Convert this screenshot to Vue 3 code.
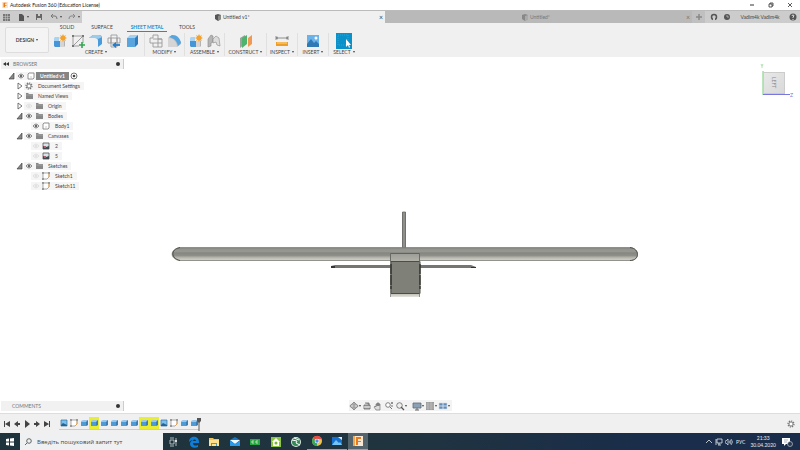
<script setup>
const ribbonTabs = ['SOLID', 'SURFACE', 'SHEET METAL', 'TOOLS']

const groups = [
  { name: 'CREATE', icons: ['component', 'sketch', 'flange', 'bend', 'extrude'], cls: 'g-create' },
  { name: 'MODIFY', icons: ['unfold', 'fillet'], cls: 'g-pair' },
  { name: 'ASSEMBLE', icons: ['component', 'joint'], cls: 'g-pair' },
  { name: 'CONSTRUCT', icons: ['plane'], cls: 'g-construct' },
  { name: 'INSPECT', icons: ['measure'], cls: 'g-single' },
  { name: 'INSERT', icons: ['picture'], cls: 'g-single' },
  { name: 'SELECT', icons: ['select'], cls: 'g-single' },
]

const tree = [
  { label: 'Untitled v1', level: 0, slots: ['open', 'eye', 'doc'], root: true },
  { label: 'Document Settings', level: 1, slots: ['closed', 'gear'] },
  { label: 'Named Views', level: 1, slots: ['closed', 'folder'] },
  { label: 'Origin', level: 1, slots: ['closed', 'eye-off', 'folder'] },
  { label: 'Bodies', level: 1, slots: ['open', 'eye', 'folder'] },
  { label: 'Body1', level: 2, slots: ['eye', 'doc'] },
  { label: 'Canvases', level: 1, slots: ['open', 'eye', 'folder'] },
  { label: '2', level: 2, slots: ['eye-off', 'canvas'] },
  { label: '5', level: 2, slots: ['eye-off', 'canvas'] },
  { label: 'Sketches', level: 1, slots: ['open', 'eye', 'folder'] },
  { label: 'Sketch1', level: 2, slots: ['eye-off', 'sheet'] },
  { label: 'Sketch11', level: 2, slots: ['eye-off', 'sheet'] },
]

const navTools = [
  { icon: 'orbit', name: 'Orbit', more: true },
  { icon: 'look', name: 'Look at' },
  { icon: 'hand', name: 'Pan' },
  { icon: 'zoom', name: 'Zoom' },
  { icon: 'fit', name: 'Fit', more: true },
  { icon: 'display', name: 'Display settings', more: true, gap: true },
  { icon: 'grid', name: 'Grid and snaps', more: true },
  { icon: 'views', name: 'Viewports', more: true },
]

const playback = [
  { icon: 'first', name: 'Go to start' },
  { icon: 'prev', name: 'Step back' },
  { icon: 'play', name: 'Play' },
  { icon: 'next', name: 'Step forward' },
  { icon: 'last', name: 'Go to end' },
]

const features = [
  'pic', 'sheet', 'box', 'box!', 'box', 'box', 'box', 'box', 'box!', 'box!', 'pic', 'sheet', 'box', 'box',
].map((f) => ({ icon: f.replace('!', ''), warn: f.endsWith('!') }))

const apps = [
  { icon: 'taskview', name: 'Task view' },
  { icon: 'edge', name: 'Edge' },
  { icon: 'explorer', name: 'Explorer' },
  { icon: 'mail', name: 'Mail' },
  { icon: 'money', name: 'Cards' },
  { icon: 'home', name: 'Home design' },
  { icon: 'globe', name: 'Globe' },
  { icon: 'chrome', name: 'Chrome', state: 'running' },
  { icon: 'photos', name: 'Photos', state: 'running' },
  { icon: 'fusion', name: 'Fusion 360', state: 'running active' },
]
</script>

<template>
  <div class="app">
    <svg class="defs" aria-hidden="true">
      <defs>
        <linearGradient id="wing" x1="0" y1="0" x2="0" y2="1">
          <stop offset="0" stop-color="#7b7c77" />
          <stop offset=".12" stop-color="#92938d" />
          <stop offset=".3" stop-color="#979892" />
          <stop offset=".42" stop-color="#85867f" />
          <stop offset=".62" stop-color="#8e8f89" />
          <stop offset=".75" stop-color="#b0b0a8" />
          <stop offset=".92" stop-color="#cdccc3" />
          <stop offset="1" stop-color="#8d8d85" />
        </linearGradient>
        <linearGradient id="cap" x1="0" y1="0" x2="0" y2="1">
          <stop offset="0" stop-color="#9b9c96" />
          <stop offset="1" stop-color="#b3b3ac" />
        </linearGradient>
        <linearGradient id="foot" x1="0" y1="0" x2="0" y2="1">
          <stop offset="0" stop-color="#b5b4ac" />
          <stop offset="1" stop-color="#e4e3dc" />
        </linearGradient>
      </defs>
      <symbol id="i-component" viewBox="0 0 14 14"><path d="M1 4l1-1h4v5H1z" fill="#a9d3f2" /><path d="M1 7h6v6H2l-1-1z" fill="#4596d8" /><path d="M7 7h4l1-1v6l-1 1H7z" fill="#b3b3b3" /><path d="M7 7h4v6H7z" fill="#d5d5d5" /><path d="M10 0l1 2 2-1-1 2 2 1-2 1 1 2-2-1-1 2-1-2-2 1 1-2-2-1 2-1-1-2 2 1z" fill="#f3a22d" /></symbol>
      <symbol id="i-sketch" viewBox="0 0 14 14"><path d="M2 2h10v7M2 2v10h6M3 11l8-8" fill="none" stroke="#888" stroke-width=".8" /><path d="M1 1h2v2H1zM11 1h2v2h-2zM1 11h2v2H1z" fill="#777" /><path d="M11 8v6M8 11h6" stroke="#32a652" stroke-width="1.6" /></symbol>
      <symbol id="i-flange" viewBox="0 0 14 14"><path d="M0 4l4-3h6q3 0 3 3v6l-4 3V7q0-3-3-3z" fill="#4a9bdc" /><path d="M0 4l4-3h6q2 0 3 2L9 5Q8 4 6 4z" fill="#9bcbed" /></symbol>
      <symbol id="i-bend" viewBox="0 0 14 14"><path d="M4 1h6v12H4zM1 4h12v5H1zM4 4v5M10 4v5" fill="#f2f2f2" stroke="#999" stroke-width=".9" /><path d="M13 11H8" fill="none" stroke="#237ccc" stroke-width="1.8" /><path d="M9 8v6l-4-3z" fill="#237ccc" /></symbol>
      <symbol id="i-extrude" viewBox="0 0 14 14"><path d="M2 4l3-3h8v9l-3 3H2z" fill="#a4d0f0" /><path d="M2 4h8v9H2z" fill="#5aa5de" /><path d="M10 4l3-3v9l-3 3z" fill="#2f7dbf" /></symbol>
      <symbol id="i-unfold" viewBox="0 0 14 14"><path d="M4 1h5v4h4v8H4V9H1V4h3zM4 5h9M4 9h9M9 5v8" fill="#f0f0f0" stroke="#999" stroke-width=".9" /></symbol>
      <symbol id="i-fillet" viewBox="0 0 14 14"><path d="M1 4l4-3 5 1 4 6v2l-4 3H1z" fill="#bcbcbc" /><path d="M2 3l3-2c5 0 8 3 9 8l-3 3C10 7 7 4 2 3z" fill="#55a5e1" /><path d="M1 4c6 0 9 4 9 9H1z" fill="#d5d5d5" /></symbol>
      <symbol id="i-joint" viewBox="0 0 14 14"><path d="M1 5l3-4 2 1v6l-2 1v3l-3 1z" fill="#b5b5b5" stroke="#888" stroke-width=".6" /><path d="M6 5l3-3 3 2 1 8-3-1-1-3-3 1z" fill="#ddd" stroke="#888" stroke-width=".6" /></symbol>
      <symbol id="i-plane" viewBox="0 0 14 14"><path d="M1 4l5-3v9l-5 4z" fill="#9ba39d" /><path d="M3 4l5-3v9l-5 4z" fill="#4db46d" /><path d="M9 4l4-3v9l-4 3z" fill="#ee9a55" /></symbol>
      <symbol id="i-measure" viewBox="0 0 14 14"><path d="M1 4h12M1 2v4M13 2v4M3 3L1 4l2 1M11 3l2 1-2 1" fill="none" stroke="#777" stroke-width=".8" /><path d="M1 8h12v4H1z" fill="#ef9d26" /><path d="M3 8v2m2-2v2m2-2v2m2-2v2m2-2v2" stroke="#fbd88f" /></symbol>
      <symbol id="i-picture" viewBox="0 0 14 14"><path d="M1 1h12v12H1z" fill="#6ab2ea" /><path d="M1 10l4-5 3 4 2-2 3 3v3H1z" fill="#2f79b4" /><circle cx="10" cy="4" r="1.5" fill="#fff" /></symbol>
      <symbol id="i-select" viewBox="0 0 16 16"><path d="M0 0h16v16H0z" fill="#0a91c9" /><path d="M2 2h10v10H2z" fill="none" stroke="#2ba4d6" stroke-dasharray="1 1" /><path d="M10 6v8l2-2 1 3 1-1-1-2h2z" fill="#fff" /></symbol>

      <symbol id="i-open" viewBox="0 0 10 10"><path d="M8 2v6H3z" fill="#888" stroke="#333" stroke-width=".6" /></symbol>
      <symbol id="i-closed" viewBox="0 0 10 10"><path d="M4 2l4 3-4 3z" fill="#fff" stroke="#555" stroke-width=".8" /></symbol>
      <symbol id="i-eye" viewBox="0 0 10 10"><path d="M2 5q3-4 6 0q-3 4-6 0z" fill="#ddd" stroke="#777" stroke-width=".8" /><circle cx="5" cy="5" r="1.2" fill="#666" /></symbol>
      <symbol id="i-eye-off" viewBox="0 0 10 10"><path d="M2 5q3-4 6 0q-3 4-6 0z" fill="#eee" stroke="#ddd" stroke-width=".8" /><circle cx="5" cy="5" r="1" fill="#ddd" /></symbol>
      <symbol id="i-doc" viewBox="0 0 10 10"><path d="M2 3l1-1h5v5L7 8H2z" fill="#fff" stroke="#777" stroke-width=".8" /><path d="M4 6h2" stroke="#aaa" stroke-width=".6" /></symbol>
      <symbol id="i-gear" viewBox="0 0 10 10"><circle cx="5" cy="5" r="3" fill="none" stroke="#777" stroke-width="1.2" stroke-dasharray="1.3 1" /><circle cx="5" cy="5" r="2.1" fill="#fff" stroke="#777" /></symbol>
      <symbol id="i-folder" viewBox="0 0 10 10"><path d="M2 2h2l1 1h4v5H2z" fill="#888" /><path d="M2 4h7" stroke="#bbb" stroke-width=".5" /></symbol>
      <symbol id="i-canvas" viewBox="0 0 10 10"><path d="M2 2h6v6H2z" fill="#dbe4e8" stroke="#555" stroke-width=".8" /><path d="M2 5l3 1 3-1v3H2z" fill="#3e4a50" /><path d="M3 5h2v2H3z" fill="#b65b70" /></symbol>
      <symbol id="i-sheet" viewBox="0 0 10 10"><path d="M2 2h6v4L6 8H2z" fill="#fff" stroke="#888" stroke-width=".7" /><path d="M8 3v3M6 8l2-2" stroke="#e8a04b" stroke-width=".9" /><path d="M1 1h2v2H1zM1 7h2v2H1zM7 1h2v2H7z" fill="#999" /></symbol>

      <symbol id="i-orbit" viewBox="0 0 10 10"><path d="M5 1v8M1 5h8M3 3l2-2 2 2M3 7l2 2 2-2" fill="none" stroke="#777" stroke-width=".7" /><ellipse cx="5" cy="5" rx="4" ry="2" fill="none" stroke="#777" stroke-width=".8" /></symbol>
      <symbol id="i-look" viewBox="0 0 10 10"><path d="M2 4h6v4H2zM3 2h4v2" fill="#aaa" stroke="#666" stroke-width=".8" /><path d="M2 6h6" stroke="#eee" /></symbol>
      <symbol id="i-hand" viewBox="0 0 10 10"><path d="M3 9L1 6l1-1 1 1V3h1v2V2h1v3V2h1v3V3h1v4L7 9z" fill="#ddd" stroke="#666" stroke-width=".6" /></symbol>
      <symbol id="i-zoom" viewBox="0 0 10 10"><circle cx="4" cy="4" r="2.3" fill="#fff" stroke="#666" stroke-width=".8" /><path d="M6 6l2 2M7 2h2M8 1v2M7 5h2" stroke="#666" stroke-width=".9" /></symbol>
      <symbol id="i-fit" viewBox="0 0 10 10"><circle cx="4.500" cy="4.500" r="2.800" fill="#eee" stroke="#666" stroke-width=".8" /><path d="M6 6l3 3" stroke="#555" stroke-width="1.2" /></symbol>
      <symbol id="i-display" viewBox="0 0 10 10"><path d="M1 2h8v5H1z" fill="#8ba1b5" stroke="#606b75" stroke-width=".8" /><path d="M5 7v2M3 9h4" stroke="#666" /></symbol>
      <symbol id="i-grid" viewBox="0 0 10 10"><path d="M1 1h8v8H1z" fill="#999" /><path d="M1 3h8M1 5h8M1 7h8M3 1v8M6 1v8" stroke="#ccc" stroke-width=".5" /></symbol>
      <symbol id="i-views" viewBox="0 0 10 10"><path d="M1 2h4v3H1zM5 2h4v3H5zM1 5h4v3H1zM5 5h4v3H5z" fill="#638bb5" stroke="#d0deed" stroke-width=".6" /></symbol>

      <symbol id="i-first" viewBox="0 0 10 10"><path d="M2 2h1v6H2zM8 2v6L3 5z" fill="#444" /></symbol>
      <symbol id="i-prev" viewBox="0 0 10 10"><path d="M6 2v6L2 5zM6 4h2v2H6z" fill="#444" /></symbol>
      <symbol id="i-play" viewBox="0 0 10 10"><path d="M3 1v8l5-4z" fill="#444" /></symbol>
      <symbol id="i-next" viewBox="0 0 10 10"><path d="M4 2v6l4-3zM2 4h2v2H2z" fill="#444" /></symbol>
      <symbol id="i-last" viewBox="0 0 10 10"><path d="M2 2v6l5-3zM7 2h1v6H7z" fill="#444" /></symbol>
      <symbol id="i-box" viewBox="0 0 10 10"><path d="M2 3l2-1h5v5L7 8H2z" fill="#9ac7ea" /><path d="M2 4h5v4H2z" fill="#4f9bd6" /><path d="M7 4l2-2v5L7 8z" fill="#3d7db5" /></symbol>
      <symbol id="i-pic" viewBox="0 0 10 10"><path d="M2 2h6v6H2z" fill="#7cc0ee" stroke="#31719e" stroke-width=".7" /><path d="M2 7l2-2 2 1 2 1v1H2z" fill="#256594" /></symbol>

      <symbol id="i-taskview" viewBox="0 0 12 12"><path d="M3 4h4v4H3zM3 2h4M3 10h4M9 2v8" fill="none" stroke="#d3dadd" stroke-width=".8" /><path d="M8 4h2v2H8z" fill="#d3dadd" /></symbol>
      <symbol id="i-edge" viewBox="0 0 12 12"><path d="M1 6c0-7 10-7 10 0v1H5c0 3 3 3 5 2v2C6 13 2 11 2 8c0-2 1-3 3-4-2 0-3 1-4 2zM5 5h3c0-2-3-2-3 0z" fill="#0f7ed8" /></symbol>
      <symbol id="i-explorer" viewBox="0 0 12 12"><path d="M1 2h4l1 1h5v7H1z" fill="#eec258" /><path d="M1 4h10v6H1z" fill="#ffe08b" /><path d="M3 10V7h6v3H8V8H4v2z" fill="#4b9bc9" /></symbol>
      <symbol id="i-mail" viewBox="0 0 12 12"><path d="M1 4l5-3 5 3v6H1z" fill="#1476c7" /><path d="M1 4h10L6 8z" fill="#f2fbff" /><path d="M1 10V5l5 3 5-3v5z" fill="#299bea" /></symbol>
      <symbol id="i-money" viewBox="0 0 12 12"><path d="M1 3h10v6H1z" fill="#28a745" /><path d="M5 5H3v2h2M9 5H7v2h2" fill="none" stroke="#d5ebca" stroke-width=".8" /></symbol>
      <symbol id="i-home" viewBox="0 0 12 12"><path d="M1 1h10v10H1z" fill="#8cc63e" /><path d="M2 6l4-4 4 4H9v4H3V6z" fill="#fff" /><circle cx="6" cy="7" r="1.500" fill="#76b82b" /></symbol>
      <symbol id="i-globe" viewBox="0 0 12 12"><circle cx="6" cy="6" r="5" fill="#d9e8df" /><circle cx="6" cy="6" r="4" fill="#348957" /><path d="M2 4l5 1-1 2 4 2M4 2l5 2" fill="none" stroke="#fff" /></symbol>
      <symbol id="i-chrome" viewBox="0 0 12 12"><circle cx="6" cy="6" r="5" fill="#efc440" /><path d="M6 6L2 3c2-3 7-3 9 1H6z" fill="#e54d42" /><path d="M6 6v5C1 11 0 6 2 3z" fill="#39a35a" /><circle cx="6" cy="6" r="2.300" fill="#fff" /><circle cx="6" cy="6" r="1.700" fill="#4b8bea" /></symbol>
      <symbol id="i-photos" viewBox="0 0 12 12"><path d="M1 2h10v8H1z" fill="#1671ce" /><path d="M1 10l4-5 3 3 1-1 2 3z" fill="#75c2f5" /><path d="M7 2h4v3z" fill="#dceefe" /></symbol>
      <symbol id="i-fusion" viewBox="0 0 12 12"><path d="M1 1h10v10H1z" fill="#f7e7d4" /><path d="M4 2h5v2H6v2h3v1H6v3H4z" fill="#e77a1b" /><path d="M1 1h2v10H1z" fill="#f6a34e" /></symbol>
    </svg>

    <header class="titlebar">
      <svg class="logo" viewBox="0 0 8 8"><path d="M0 0h8v8H0z" fill="#fbe5cb" /><path d="M2 1h4v1H4v2h2v1H4v2H2z" fill="#e57c18" /></svg>
      <h1>Autodesk Fusion 360 (Education License)</h1>
      <div class="window-controls">
        <button aria-label="Minimize"><svg viewBox="0 0 8 8"><path d="M2 4h4" stroke="#333" /></svg></button>
        <button aria-label="Restore"><svg viewBox="0 0 8 8"><path d="M2 3h3v3H2zM3 3V2h3v3H5" fill="none" stroke="#333" stroke-width=".8" /></svg></button>
        <button aria-label="Close"><svg viewBox="0 0 8 8"><path d="M2 2l4 4M6 2L2 6" stroke="#333" stroke-width=".8" /></svg></button>
      </div>
    </header>

    <nav class="docbar">
      <div class="quick">
        <button aria-label="Data panel"><svg viewBox="0 0 8 8"><path d="M1 1h2v2H1zM3.500 1h2v2h-2zM6 1h2v2H6zM1 3.500h2v2H1zM3.500 3.500h2v2h-2zM6 3.500h2v2H6zM1 6h2v2H1zM3.500 6h2v2h-2zM6 6h2v2H6z" fill="#777" /></svg></button>
        <button aria-label="File"><svg viewBox="0 0 8 8"><path d="M2 1h3l2 2v5H2z" fill="#555" /></svg><i class="caret"></i></button>
        <button aria-label="Save"><svg viewBox="0 0 8 8"><path d="M1 1h6v6H1z" fill="#666" /><path d="M3 1h2v2H3zM2 5h4v2H2z" fill="#ccc" /></svg></button>
        <button aria-label="Undo"><svg viewBox="0 0 8 8"><path d="M1 3h4q2 0 2 3M3 1L1 3l2 2" fill="none" stroke="#777" /></svg><i class="caret"></i></button>
        <button aria-label="Redo"><svg viewBox="0 0 8 8"><path d="M7 3H3Q1 3 1 6M5 1l2 2-2 2" fill="none" stroke="#888" /></svg><i class="caret"></i></button>
      </div>
      <div class="doctab current">
        <svg viewBox="0 0 8 8"><path d="M1 2l3-1 3 1v4L4 8 1 6z" fill="#555" /><path d="M4 3l3-1v4L4 8z" fill="#888" /></svg>
        <a href="#">Untitled v1*</a>
        <button aria-label="Close tab">×</button>
      </div>
      <div class="doctab">
        <svg viewBox="0 0 8 8"><path d="M1 2l3-1 3 1v4L4 8 1 6z" fill="#888" /><path d="M4 3l3-1v4L4 8z" fill="#aaa" /></svg>
        <a href="#">Untitled*</a>
        <button aria-label="Close tab">×</button>
      </div>
      <div class="account">
        <button class="add" aria-label="New design"><svg viewBox="0 0 8 8"><path d="M4 1v6M1 4h6" stroke="#888" stroke-width="1.5" /></svg></button>
        <button aria-label="Extensions"><svg viewBox="0 0 8 8"><circle cx="4" cy="4" r="2.500" fill="none" stroke="#555" stroke-width="1.500" /><path d="M3 5h2v3H3z" fill="#ccc" /></svg></button>
        <button aria-label="Job status"><svg viewBox="0 0 8 8"><circle cx="4" cy="4" r="3" fill="#555" /><path d="M4 2v2h2" fill="none" stroke="#ccc" stroke-width=".7" /></svg></button>
        <button class="user">Vadim4k Vadim4k</button>
        <button aria-label="Help"><svg viewBox="0 0 8 8"><circle cx="4" cy="4" r="3.500" fill="#555" /><path d="M3 3q0-1 1-1t1 1L4 4v1M4 6v1" fill="none" stroke="#fff" stroke-width=".8" /></svg></button>
      </div>
    </nav>

    <section class="ribbon">
      <button class="workspace">DESIGN <i class="caret"></i></button>
      <div class="toolset">
        <div class="ribbon-tabs">
          <a v-for="t in ribbonTabs" :key="t" href="#" :class="{ active: t === 'SHEET METAL' }">{{ t }}</a>
        </div>
        <div class="groups">
          <div v-for="g in groups" :key="g.name" class="group" :class="g.cls">
            <div class="tools">
              <button v-for="ic in g.icons" :key="ic" :aria-label="ic" :class="{ big: ic === 'select' }"><svg><use :href="'#i-' + ic" /></svg></button>
            </div>
            <button class="group-name">{{ g.name }}<i class="caret"></i></button>
          </div>
        </div>
      </div>
    </section>

    <main class="viewport">
      <svg class="model" viewBox="0 57 800 356" role="img" aria-label="Model, left view">
        <path d="M402 212h4v36h-4z" fill="#8e8f8b" /><path d="M402.500 248v-36h3v36" fill="none" stroke="#686965" stroke-width=".8" />
        <path d="M331 266l4-1h136l5 2v1H332z" fill="#757571" /><path d="M331 266h4v2h-4zM471 267h5v1h-5z" fill="#333" />
        <path d="M180 247.500h450c10 1 10 13 0 13H180c-10-1-11-11 0-13z" fill="url(#wing)" stroke="#7b7c76" stroke-width=".7" />
        <path d="M180 247.500c-10 2-9 11 0 13M630 247.500c10 1 10 13 0 13" fill="none" stroke="#4b4c47" stroke-width=".9" />
        <path d="M390.500 253.500h29v8h-29z" fill="url(#cap)" stroke="#5c5d58" stroke-width=".9" />
        <path d="M391 293h29v4h-29z" fill="url(#foot)" />
        <path d="M391 261.500h29v32h-29z" fill="#7f8078" stroke="#4c4d47" />
        <path d="M390.500 254v43M419.500 254v43" stroke="#6c6d67" stroke-width=".7" />
        <path d="M391 264v25M420 264v25" stroke="#292a25" stroke-width="1.200" stroke-dasharray="10 1" />
      </svg>
      <aside class="side">
        <div class="browser">
          <div class="panel-head"><svg viewBox="0 0 8 8"><path d="M4 2v4L1 4zM7 2v4L4 4z" fill="#333" /></svg><h2>BROWSER</h2><button aria-label="Browser options"><i class="dot"></i></button></div>
          <ul>
            <li v-for="n in tree" :key="n.label" :class="['level' + n.level, { root: n.root }]">
              <svg v-for="s in n.slots" :key="s" :class="{ toggle: s === 'open' || s === 'closed' }"><use :href="'#i-' + s" y="-1" width="10" height="10" /></svg>
              <span>{{ n.label }}</span>
              <svg v-if="n.root" class="target" viewBox="0 0 10 8"><circle cx="5" cy="4" r="3" fill="#fff" stroke="#555" stroke-width=".8" /><circle cx="5" cy="4" r="1.300" fill="#444" /></svg>
            </li>
          </ul>
        </div>
        <div class="panel-head comments"><h2>COMMENTS</h2><button aria-label="Add comment"><i class="dot"></i></button></div>
      </aside>
      <div class="navbar">
        <button v-for="t in navTools" :key="t.icon" :aria-label="t.name" :class="{ apart: t.gap }"><svg><use :href="'#i-' + t.icon" /></svg><i v-if="t.more" class="caret"></i></button>
      </div>
      <div class="cube-area">
        <svg viewBox="0 0 36 38" class="axes" aria-hidden="true"><path d="M3 8v24" stroke="#76ca76" /><path d="M3 31.500h27" stroke="#7777df" /><path d="M1 1l1 2 1-2M2 3v2" stroke="#8ed58e" stroke-width=".7" fill="none" /></svg>
        <button class="cube"><span>LEFT</span></button>
        <b>Z</b>
      </div>
    </main>

    <footer class="timeline">
      <div class="playback"><button v-for="p in playback" :key="p.icon" :aria-label="p.name"><svg><use :href="'#i-' + p.icon" /></svg></button></div>
      <div class="features"><button v-for="(f, i) in features" :key="i" :aria-label="'Feature ' + (i + 1)" :class="{ warn: f.warn }"><svg><use :href="'#i-' + f.icon" /></svg></button></div>
      <svg class="marker" viewBox="0 0 6 14"><path d="M1 1h4v3L3 6 1 4z" fill="#555" /><path d="M3 5v9" stroke="#555" /></svg>
      <button class="settings" aria-label="Timeline settings"><svg><use href="#i-gear" /></svg></button>
    </footer>

    <div class="taskbar">
      <button class="start" aria-label="Start"><svg viewBox="0 0 8 8"><path d="M0 1l3-.5v3H0zM4 .5L8 0v3.500H4zM0 4.500h3v3L0 7zM4 4.500h4V8l-4-.5z" fill="#fff" /></svg></button>
      <label class="search">
        <svg viewBox="0 0 8 8"><circle cx="5" cy="3" r="2.300" fill="none" stroke="#444" stroke-width=".8" /><path d="M3 5L1 7" stroke="#444" stroke-width=".8" /></svg>
        <input type="search" aria-label="Пошук" placeholder="Введіть пошуковий запит тут" />
      </label>
      <button v-for="a in apps" :key="a.icon" class="task" :class="a.state" :aria-label="a.name"><svg><use :href="'#i-' + a.icon" /></svg></button>
      <div class="tray">
        <svg viewBox="0 0 8 8"><path d="M1 5l3-3 3 3" fill="none" stroke="#e5e9ef" stroke-width=".8" /></svg>
        <svg viewBox="0 0 8 8"><path d="M2 1h5v4H2zM1 1v6M3 7h3M4 5v2" fill="none" stroke="#e5e9ef" stroke-width=".8" /></svg>
        <svg viewBox="0 0 8 8"><path d="M0 3h1l2-2v6L1 5H0zM4 3q1 1 0 2M5 2q2 2 0 4M6 1q3 3 0 6" fill="none" stroke="#e5e9ef" stroke-width=".7" /></svg>
        <span>РУС</span>
        <time><span>21:33</span><span>30.04.2020</span></time>
        <svg class="notice" viewBox="0 0 12 12"><path d="M1 2h8v6H5L3 10V8H1z" fill="#fff" /><path d="M3 4h4M3 6h3" stroke="#7c8796" stroke-width=".6" /><circle cx="9" cy="8" r="2.500" fill="#26384f" stroke="#ddd" stroke-width=".6" /></svg>
      </div>
    </div>
  </div>
</template>

<style>
body {
  background: #fff;
}
</style>

<style scoped>
.app {
  display: flex;
  flex-direction: column;
  min-height: 100vh;
  font: 5px/8px Lato, "Open Sans", sans-serif;
  color: #444;
}
.defs {
  position: absolute;
  width: 0;
  height: 0;
}
button {
  display: flex;
  align-items: center;
  justify-content: center;
  padding: 0;
  border: 0;
  background: none;
  font: inherit;
  color: inherit;
}
svg {
  display: block;
  flex: none;
}
a {
  color: inherit;
  text-decoration: none;
}
h1,
h2,
ul {
  margin: 0;
  padding: 0;
  font-size: 5px;
  font-weight: 400;
  list-style: none;
}
.caret {
  flex: none;
  margin-left: 2px;
  border: solid transparent;
  border-width: 2px 1px 0;
  border-top-color: #444;
}

.titlebar {
  display: flex;
  align-items: center;
  height: 10px;
  padding: 0 6px 0 2px;
  color: #222;
}
.logo {
  width: 6px;
  height: 6px;
  margin-right: 2px;
}
.window-controls {
  display: flex;
  gap: 11px;
  margin-left: auto;
}
.window-controls svg,
.docbar svg {
  width: 8px;
  height: 8px;
}

.docbar {
  display: flex;
  height: 13px;
  background: #ccc;
  box-sizing: border-box;
  border-top: 1px solid #bbb;
}
.quick {
  display: flex;
  align-items: center;
  justify-content: space-between;
  width: 82px;
  padding: 0 2px;
  box-sizing: border-box;
}
.doctab {
  display: flex;
  flex: 1;
  align-items: center;
  gap: 1px;
  padding: 0 2px 0 132px;
  background: #b9b9b9;
  color: #777;
}
.doctab + .doctab {
  padding-left: 136px;
}
.doctab.current {
  background: #f0f0f0;
  color: #444;
}
.doctab button {
  margin-left: auto;
  font-size: 7px;
}
.account {
  display: flex;
  align-items: center;
  gap: 5px;
  padding-right: 3px;
}
.account .add {
  width: 13px;
  height: 12px;
  background: #c0c0c0;
}
.account .user {
  width: 48px;
  white-space: nowrap;
}

.ribbon {
  display: flex;
  height: 34px;
  background: #f0f0f0;
}
.workspace {
  width: 44px;
  margin: 4px 3px 4px 5px;
  border: 1px solid #ddd;
  border-radius: 2px;
  background: #f4f4f4;
  font-weight: 700;
}
.ribbon-tabs {
  display: grid;
  grid-template-columns: 20px 30px 40px 20px;
  gap: 10px;
  height: 8px;
  padding-left: 5px;
}
.ribbon-tabs a {
  line-height: 8px;
  text-align: center;
  white-space: nowrap;
  box-sizing: border-box;
}
.ribbon-tabs a.active {
  border-bottom: 1px solid #1c8fd0;
  color: #1c8fd0;
  font-weight: 700;
}
.groups {
  display: flex;
  margin-top: 2px;
}
.group {
  display: flex;
  flex-direction: column;
  align-items: center;
  box-sizing: border-box;
}
.group + .group {
  border-left: 1px solid #e0e0e0;
}
.tools {
  display: flex;
  align-items: center;
  justify-content: center;
  gap: 4px;
  height: 15px;
}
.tools svg {
  width: 14px;
  height: 14px;
}
.tools .big svg {
  width: 16px;
  height: 16px;
}
.group-name {
  height: 8px;
  line-height: 8px;
  white-space: nowrap;
}
.g-create {
  width: 92px;
  padding-right: 4px;
}
.g-pair {
  width: 40px;
}
.g-construct {
  width: 42px;
}
.g-single {
  width: 31px;
}

.viewport {
  position: relative;
  display: flex;
  flex: 1;
  justify-content: space-between;
  min-height: 340px;
}
.model {
  position: absolute;
  inset: 0;
  width: 100%;
  height: 100%;
}
.side {
  position: relative;
  display: flex;
  flex-direction: column;
  justify-content: space-between;
  width: 123px;
  padding: 2px 0 2px 1px;
}
.panel-head {
  display: flex;
  align-items: center;
  gap: 3px;
  height: 10px;
  padding: 0 3px 0 1px;
  border-right: 1px solid #ccc;
  background: #f1f1f1;
  color: #777;
}
.panel-head svg {
  width: 8px;
  height: 8px;
}
.panel-head button {
  margin-left: auto;
}
.comments {
  padding-left: 11px;
}
.dot {
  width: 4px;
  height: 4px;
  border-radius: 50%;
  background: #333;
}
.browser ul {
  padding-top: 2px;
}
.browser li {
  display: flex;
  align-items: center;
  height: 10px;
}
.browser li svg {
  width: 10px;
  height: 8px;
  background: #f5f5f5;
}
.browser li .toggle {
  background: none;
}
.browser li span {
  padding: 0 4px;
  background: #f5f5f5;
  white-space: nowrap;
}
.browser .level0 {
  padding-left: 5px;
}
.browser .level1 {
  padding-left: 13px;
}
.browser .level2 {
  padding-left: 30px;
}
.browser .root span {
  background: #858585;
  color: #fff;
  font-weight: 700;
}
.browser .root .target {
  background: none;
}
.navbar {
  position: relative;
  display: flex;
  align-self: flex-end;
  align-items: center;
  gap: 1px;
  height: 11px;
  margin-bottom: 2px;
  padding: 0 2px 0 0;
  background: #f3f3f3;
}
.navbar svg {
  width: 10px;
  height: 10px;
}
.navbar .caret {
  margin-left: 0;
}
.navbar .apart {
  margin-left: 4px;
}
.cube-area {
  position: relative;
  width: 124px;
}
.axes {
  position: absolute;
  top: 6px;
  right: 4px;
  width: 36px;
  height: 38px;
}
.cube {
  position: absolute;
  top: 15px;
  right: 15px;
  width: 22px;
  height: 22px;
  border: 1px solid #ccc;
  background: linear-gradient(135deg, #e8e8e8, #d9d9d9);
  color: #888;
}
.cube span {
  writing-mode: vertical-rl;
}
.cube-area b {
  position: absolute;
  top: 34px;
  right: 7px;
  color: #7777df;
  font-weight: 400;
}

.timeline {
  display: flex;
  align-items: center;
  height: 20px;
  padding: 0 4px 0 2px;
  border-top: 1px solid #ddd;
  background: #f0f0f0;
  box-sizing: border-box;
}
.timeline svg {
  width: 10px;
  height: 10px;
}
.playback {
  display: flex;
  width: 57px;
}
.features {
  display: flex;
  height: 12px;
  border-bottom: 1px solid #ccc;
}
.features .warn {
  background: #e9ee35;
}
.timeline .marker {
  width: 6px;
  height: 14px;
  margin-left: -3px;
}
.timeline .settings {
  margin-left: auto;
}

.taskbar {
  display: flex;
  height: 17px;
  background: linear-gradient(90deg, #1e333c, #20343f 50%, #1a2d4a 80%);
  color: #e5e9ef;
}
.start {
  width: 20px;
}
.start svg,
.search svg {
  width: 8px;
  height: 8px;
}
.search {
  display: flex;
  align-items: center;
  gap: 5px;
  width: 143px;
  padding-left: 4px;
  box-sizing: border-box;
  background: #eef0f1;
}
.search input {
  flex: 1;
  min-width: 0;
  padding: 0;
  border: 0;
  background: none;
  font: 6px/10px "Open Sans", "Noto Sans", sans-serif;
}
.search input::placeholder {
  color: #444;
  opacity: 1;
}
.task {
  width: 20px;
  margin-right: 1px;
  box-sizing: border-box;
}
.task:nth-of-type(odd) {
  margin-right: 0;
}
.task svg {
  width: 12px;
  height: 12px;
}
.task.running {
  border-bottom: 1px solid #71acd9;
}
.task.active {
  background: #53646c;
}
.tray {
  display: flex;
  align-items: center;
  gap: 2px;
  margin-left: auto;
  padding-right: 7px;
}
.tray svg {
  width: 8px;
  height: 8px;
}
.tray > span {
  margin: 0 3px 0 1px;
}
.tray time {
  display: flex;
  flex-direction: column;
  align-items: center;
  line-height: 7px;
}
.tray .notice {
  width: 12px;
  height: 12px;
  margin-left: 3px;
}
</style>
